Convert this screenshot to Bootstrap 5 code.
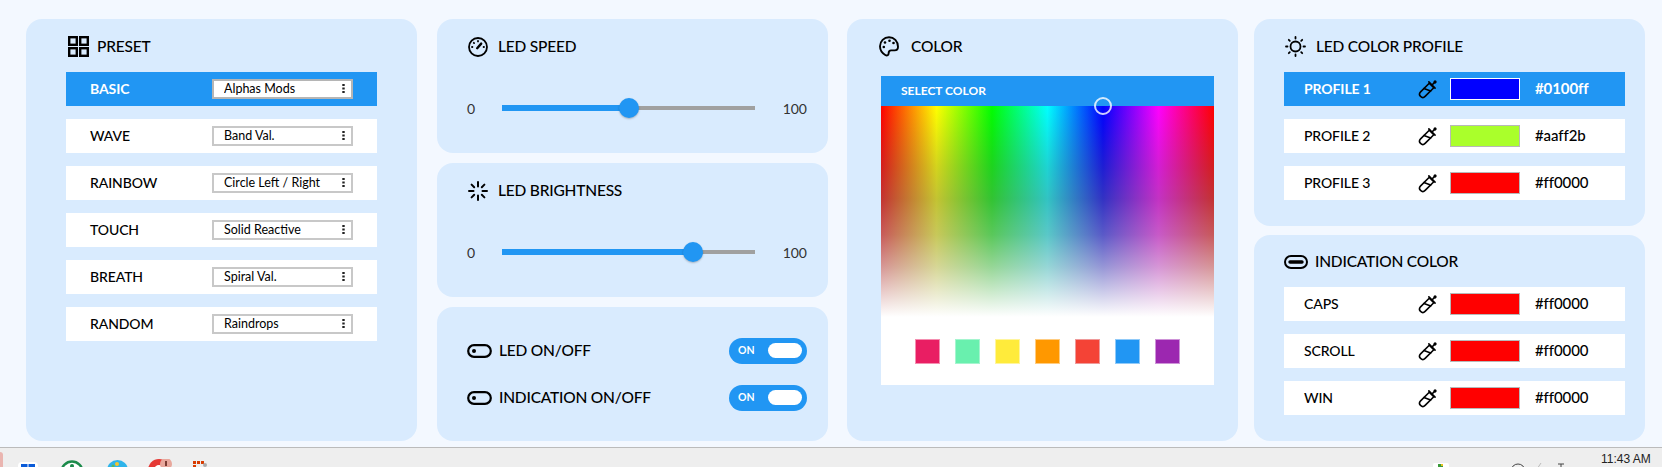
<!DOCTYPE html>
<html lang="en">
<head>
<meta charset="utf-8">
<title>LED settings</title>
<link href="https://cdn.jsdelivr.net/npm/bootstrap@5.3.0/dist/css/bootstrap.min.css" rel="stylesheet">
<style>
html,body{height:467px;overflow:hidden}
body{background:#f3f8ff;font-family:"Lato","Liberation Sans",sans-serif;color:#000}
.page-wrap{height:447px;padding:19px 17px 0 26px}
.cols{height:422px}
.col-box{width:391px;flex:none;height:422px}
.gap-a{margin-left:20px}.gap-b{margin-left:19px}.gap-c{margin-left:16px}
.stack-3{display:grid;grid-template-rows:1fr 1fr 1fr;row-gap:10.5px}
.stack-2{display:grid;grid-template-rows:207px 206px;row-gap:9px}
.pane{background:#d9ebfe;border-radius:16px;position:relative;min-height:0}
.pane-pad{padding:0 40px 0 40px}
.pane-mid{padding:0 21px 0 30px}
.pane-right{padding:0 20px 0 30px}
.pane-head{height:53px;font-size:15.5px;font-weight:500;gap:9px;margin:0;letter-spacing:-.2px;padding:2px 0 0 2px}
.pane-head svg{flex:none}
.pane-right .pane-head,.pane-mid .pane-head{padding-left:1px}
.pane-mid .pane-head{gap:10px}
.pane-right .pane-head{gap:10px}
.head-color{gap:12px!important;padding-left:2px!important}
.head-ind{gap:7px!important;padding-left:0!important;padding-top:1px!important;height:52px!important}
.head-preset{gap:8px}
.item-row{height:34px;background:#fff;margin-bottom:13px;font-size:14px;font-weight:500;padding-bottom:1px;letter-spacing:-.1px}
.item-row.is-on{background:#2196f3;color:#fff;font-weight:700}
.name-a{width:146px;padding-left:24px}
.name-b{width:134px;padding-left:20px}
.sel-led{width:141px;height:20px;padding:0 18px 0 10px;font-size:12.5px;line-height:16px;border-radius:0;border:2px solid #c8c8c8;color:#000;background-color:#fff;font-family:inherit;letter-spacing:0;
 background-image:url("data:image/svg+xml,%3Csvg xmlns='http://www.w3.org/2000/svg' width='3' height='9'%3E%3Cpath d='M.3 0h2.400v2H.3zM.3 3.500h2.400v2H.3zM.3 7h2.400v2H.3z' fill='%23222'/%3E%3C/svg%3E");
 background-size:3px 9px;background-position:right 6px center}
.is-on .sel-led{border-color:#b5b5b5}
.slide-row{height:20px}
.slide-end{font-size:14px;color:#333;width:35px}
.slide-end.to-right{text-align:right;width:52px}
.led-range{flex:none;width:253px;height:20px;margin:0;padding:0;-webkit-appearance:none;appearance:none;background:transparent;display:block}
.led-range::-webkit-slider-runnable-track{height:20px;background:linear-gradient(#2196f3,#2196f3) left center/var(--v) 6px no-repeat,linear-gradient(#a0a0a0,#a0a0a0) center/100% 4px no-repeat;border-radius:3px}
.led-range::-webkit-slider-thumb{-webkit-appearance:none;appearance:none;width:20px;height:20px;border-radius:50%;background:#2196f3;border:0;margin:0;box-shadow:0 1px 2px rgba(0,0,0,.25)}
.slide-gap{height:26px}
.switch-stack{gap:21px}
.switch-row{height:26px;font-size:15.5px;font-weight:500;gap:7px;letter-spacing:-.2px}
.pill-on{width:78px;height:26px;border-radius:13px;background:#2196f3;color:#fff;font-size:10.5px;font-weight:700;padding:0 5px 0 9px;letter-spacing:0}
.pill-knob{width:34px;height:15px;border-radius:8px;background:#fff}
.picker-wrap{width:333px;margin-left:4px}
.picker-top{height:30px;background:#2196f3;color:#fff;font-size:12px;font-weight:700;padding-left:20px}
.picker-field{height:211px;position:relative;background:linear-gradient(to bottom,rgba(100,100,100,0) 0,rgba(103,103,103,.29) 29%,rgba(116,116,116,.43) 44%,rgba(158,158,158,.57) 61%,rgba(200,200,200,.745) 76%,rgba(239,239,239,.92) 92%,#fff 100%),linear-gradient(to right,#f00,#ff0 16.67%,#0f0 33.33%,#0ff 50%,#00f 66.67%,#f0f 83.33%,#f00)}
.picker-dot{position:absolute;width:18px;height:18px;border-radius:50%;border:2px solid rgba(255,255,255,.8);left:213px;top:-9px}
.picker-foot{height:68px;background:#fff;gap:15px}
.chip{width:25px;height:25px;border:1px solid}
.prof-swatch{width:70px;height:22px;border:1px solid #b8b8b8}
.prof-hex{margin-left:15px;font-size:15px}
.is-on .prof-swatch{border-color:#fff}
.pip{margin-right:12px;flex:none}
.task-strip{height:20px;background:#eee;border-top:1px solid #bbb;position:relative;overflow:hidden}
.task-ico{position:absolute;top:12px}
.task-time{position:absolute;left:1601px;top:4px;font:12px/14px "Liberation Sans",sans-serif;color:#222}
.pink-tab{position:absolute;left:0;top:4px;width:3px;height:20px;background:#eab5b0;border-radius:0 3px 0 0}
</style>
</head>
<body>
<svg width="0" height="0" class="position-absolute">
<symbol id="i-pip" viewBox="0 0 20 20"><g transform="rotate(45 10 10)" fill="none" stroke="#000" stroke-width="1.6" stroke-linecap="round" stroke-linejoin="round"><path d="M6.8 5h6.400v12.300a3.200 3.200 0 0 1-6.400 0z"/><path d="M6.8 12.500l6.400-3"/><path d="M5.600 4.400h8.800"/><path d="M10 4V1"/><circle cx="10" cy="0" r=".8"/></g></symbol>
<symbol id="i-tog" viewBox="0 0 25 14"><rect x="1.2" y="1.2" width="22.6" height="11.6" rx="5.8" fill="none" stroke="#000" stroke-width="2.2"/><circle cx="7" cy="7" r="2" fill="#000"/></symbol>
</svg>
<div class="page-wrap">
<div class="cols d-flex">
 <section class="col-box pane pane-pad">
  <h2 class="pane-head head-preset d-flex align-items-center">
   <svg width="21" height="21" viewBox="0 0 21 21" fill="none" stroke="#000" stroke-width="2.4"><rect x="1.2" y="1.2" width="7.6" height="7.6"/><rect x="12.2" y="1.2" width="7.6" height="7.6"/><rect x="1.2" y="12.2" width="7.6" height="7.6"/><rect x="12.2" y="12.2" width="7.6" height="7.6"/></svg>
   PRESET</h2>
  <div class="item-row is-on d-flex align-items-center"><span class="name-a">BASIC</span><select class="form-select sel-led" aria-label="BASIC"><option>Alphas Mods</option></select></div>
  <div class="item-row d-flex align-items-center"><span class="name-a">WAVE</span><select class="form-select sel-led" aria-label="WAVE"><option>Band Val.</option></select></div>
  <div class="item-row d-flex align-items-center"><span class="name-a">RAINBOW</span><select class="form-select sel-led" aria-label="RAINBOW"><option>Circle Left / Right</option></select></div>
  <div class="item-row d-flex align-items-center"><span class="name-a">TOUCH</span><select class="form-select sel-led" aria-label="TOUCH"><option>Solid Reactive</option></select></div>
  <div class="item-row d-flex align-items-center"><span class="name-a">BREATH</span><select class="form-select sel-led" aria-label="BREATH"><option>Spiral Val.</option></select></div>
  <div class="item-row d-flex align-items-center"><span class="name-a">RANDOM</span><select class="form-select sel-led" aria-label="RANDOM"><option>Raindrops</option></select></div>
 </section>

 <div class="col-box gap-a stack-3">
  <section class="pane pane-mid">
   <h2 class="pane-head d-flex align-items-center">
    <svg width="20" height="20" viewBox="0 0 20 20" fill="none" stroke="#000" stroke-width="1.8" stroke-linecap="round"><circle cx="10" cy="10" r="9"/><path d="M9.200 11.200 13.200 6.600" stroke-width="2.4"/><path d="M10 4v.4M5.800 5.800l.3.3M4 10h.4M15.600 10h.4"/></svg>
    LED SPEED</h2>
   <div class="slide-gap"></div>
   <div class="slide-row d-flex align-items-center"><span class="slide-end">0</span><input type="range" class="led-range" min="0" max="100" value="50" style="--v:50%" aria-label="LED speed"><span class="slide-end to-right ms-auto">100</span></div>
  </section>
  <section class="pane pane-mid">
   <h2 class="pane-head d-flex align-items-center">
    <svg width="20" height="20" viewBox="0 0 20 20" fill="none" stroke="#000" stroke-width="2" stroke-linecap="round"><path d="M10 1v4.500M10 14.500V19M1 10h4.500M14.500 10H19M3.600 3.600l2.600 2.600M13.800 13.800l2.600 2.600M3.600 16.400l2.600-2.600M13.800 6.200l2.600-2.600"/></svg>
    LED BRIGHTNESS</h2>
   <div class="slide-gap"></div>
   <div class="slide-row d-flex align-items-center"><span class="slide-end">0</span><input type="range" class="led-range" min="0" max="100" step="0.5" value="77.5" style="--v:75%" aria-label="LED brightness"><span class="slide-end to-right ms-auto">100</span></div>
  </section>
  <section class="pane pane-mid switch-stack d-flex flex-column justify-content-center">
   <div class="switch-row d-flex align-items-center"><svg width="25" height="14"><use href="#i-tog"/></svg><span>LED ON/OFF</span><span class="pill-on ms-auto d-flex align-items-center justify-content-between">ON<i class="pill-knob"></i></span></div>
   <div class="switch-row d-flex align-items-center"><svg width="25" height="14"><use href="#i-tog"/></svg><span>INDICATION ON/OFF</span><span class="pill-on ms-auto d-flex align-items-center justify-content-between">ON<i class="pill-knob"></i></span></div>
  </section>
 </div>

 <section class="col-box gap-b pane pane-mid">
  <h2 class="pane-head head-color d-flex align-items-center mb-1">
   <svg width="20" height="21" viewBox="0 0 20 21" fill="none" stroke="#000" stroke-width="1.9"><path d="M10 1.200C5 1.200 1 5.200 1 10.200c0 3.600 2.200 7 5.600 9 1.600.8 3-.2 3-1.800 0-1.800.8-3 2.600-3h3.400c2 0 3.400-1.400 3.400-3.600C19 5.200 15 1.200 10 1.200z"/><g fill="#000" stroke="none"><circle cx="6" cy="6.500" r="1.300"/><circle cx="10.500" cy="4.800" r="1.300"/><circle cx="14.500" cy="7" r="1.300"/><circle cx="4.800" cy="11" r="1.300"/></g></svg>
   COLOR</h2>
  <div class="picker-wrap">
   <div class="picker-top d-flex align-items-center">SELECT COLOR</div>
   <div class="picker-field"><span class="picker-dot"></span></div>
   <div class="picker-foot d-flex align-items-center justify-content-center">
    <span class="chip" style="background:#e91e63;border-color:#f48fb1"></span>
    <span class="chip" style="background:#69f0ae;border-color:#a5f5cf"></span>
    <span class="chip" style="background:#ffeb3b;border-color:#fff59d"></span>
    <span class="chip" style="background:#ff9800;border-color:#ffcc80"></span>
    <span class="chip" style="background:#f44336;border-color:#ef9a9a"></span>
    <span class="chip" style="background:#2196f3;border-color:#90caf9"></span>
    <span class="chip" style="background:#9c27b0;border-color:#ce93d8"></span>
   </div>
  </div>
 </section>

 <div class="col-box gap-c stack-2">
  <section class="pane pane-right">
   <h2 class="pane-head d-flex align-items-center">
    <svg width="21" height="21" viewBox="0 0 21 21" fill="none" stroke="#000" stroke-width="1.8" stroke-linecap="round"><circle cx="10.500" cy="10.500" r="5"/><path d="M10.500 1v1.500M10.500 18.500V20M1 10.500h1.500M18.500 10.500H20M3.800 3.800l1 1M16.200 16.200l1 1M3.800 17.200l1-1M16.200 4.800l1-1"/></svg>
    LED COLOR PROFILE</h2>
   <div class="item-row is-on d-flex align-items-center"><span class="name-b">PROFILE 1</span><svg class="pip" width="20" height="20"><use href="#i-pip"/></svg><span class="prof-swatch" style="background:#0100ff"></span><span class="prof-hex">#0100ff</span></div>
   <div class="item-row d-flex align-items-center"><span class="name-b">PROFILE 2</span><svg class="pip" width="20" height="20"><use href="#i-pip"/></svg><span class="prof-swatch" style="background:#aaff2b"></span><span class="prof-hex">#aaff2b</span></div>
   <div class="item-row d-flex align-items-center"><span class="name-b">PROFILE 3</span><svg class="pip" width="20" height="20"><use href="#i-pip"/></svg><span class="prof-swatch" style="background:#ff0000"></span><span class="prof-hex">#ff0000</span></div>
  </section>
  <section class="pane pane-right">
   <h2 class="pane-head head-ind d-flex align-items-center">
    <svg width="24" height="14" viewBox="0 0 24 14" fill="none" stroke="#000" stroke-width="2"><rect x="1" y="1" width="22" height="12" rx="6"/><path d="M6 7h12" stroke-width="3.4" stroke-linecap="round"/></svg>
    INDICATION COLOR</h2>
   <div class="item-row d-flex align-items-center"><span class="name-b">CAPS</span><svg class="pip" width="20" height="20"><use href="#i-pip"/></svg><span class="prof-swatch" style="background:#ff0000"></span><span class="prof-hex">#ff0000</span></div>
   <div class="item-row d-flex align-items-center"><span class="name-b">SCROLL</span><svg class="pip" width="20" height="20"><use href="#i-pip"/></svg><span class="prof-swatch" style="background:#ff0000"></span><span class="prof-hex">#ff0000</span></div>
   <div class="item-row d-flex align-items-center"><span class="name-b">WIN</span><svg class="pip" width="20" height="20"><use href="#i-pip"/></svg><span class="prof-swatch" style="background:#ff0000"></span><span class="prof-hex">#ff0000</span></div>
  </section>
 </div>
</div>
</div>
<footer class="task-strip">
 <span class="pink-tab"></span>
 <svg class="task-ico" style="left:18px;top:14px" width="20" height="20" viewBox="0 0 20 20"><rect width="20" height="20" rx="4" fill="#fff"/><path d="M3 2h6.500v6.500H3zM10.500 2H17v6.500h-6.500z" fill="#0a5bd8"/></svg>
 <svg class="task-ico" style="left:60px" width="24" height="24" viewBox="0 0 24 24"><circle cx="12" cy="12" r="10.500" fill="#fff" stroke="#1b8a4a" stroke-width="2.5"/><circle cx="12" cy="6" r="2" fill="#1b8a4a"/></svg>
 <svg class="task-ico" style="left:107px" width="21" height="21" viewBox="0 0 21 21"><circle cx="10.500" cy="10.500" r="10.500" fill="#2fb4ea"/><circle cx="10" cy="4" r="2" fill="#f4c430"/><circle cx="6" cy="6" r="1.500" fill="#5cb85c"/></svg>
 <svg class="task-ico" style="left:148px;top:11px" width="24" height="24" viewBox="0 0 24 24"><circle cx="11" cy="11" r="11" fill="#e53935"/><circle cx="11" cy="11" r="5" fill="#fff"/><circle cx="18" cy="5" r="6" fill="#e8a79c"/><rect x="17" y="2" width="2" height="5" fill="#7a3b32"/></svg>
 <svg class="task-ico" style="left:193px;top:13px" width="14" height="10" viewBox="0 0 14 10"><path d="M0 0h3v3H0zM4 0h3v3H4zM8 0h3v3H8zM0 4h3v3H0z" fill="#d83b01"/><circle cx="12" cy="4" r="2" fill="#aaa"/></svg>
 <svg class="task-ico" style="left:1433px;top:15px" width="16" height="16" viewBox="0 0 16 16"><rect width="16" height="16" rx="2" fill="#fff"/><path d="M5 1h5v4H5z" fill="#3a9a3a"/><path d="M8 1h2v2H8z" fill="#e8c020"/></svg>
 <svg class="task-ico" style="left:1510px;top:15px" width="60" height="12" viewBox="0 0 60 12" fill="none" stroke="#444" stroke-width="1"><circle cx="8" cy="8" r="7"/><path d="M31 0l-4 6h4" stroke="#bbb"/><path d="M48 1h6M51 1v6M46 5h10"/></svg>
 <span class="task-time">11:43 AM</span>
</footer>
<script src="https://cdn.jsdelivr.net/npm/bootstrap@5.3.0/dist/js/bootstrap.bundle.min.js"></script>
</body>
</html>
